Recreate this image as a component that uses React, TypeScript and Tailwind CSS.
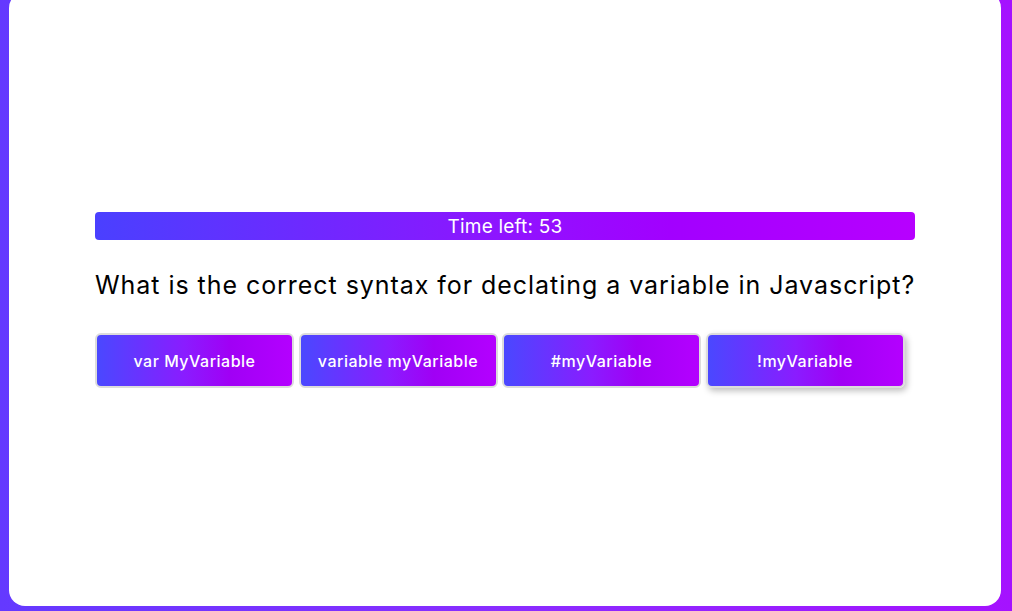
const answers = ["var MyVariable", "variable myVariable", "#myVariable", "!myVariable"];

export default function App() {
  return (
    <div className="h-[611px] w-full overflow-hidden bg-[linear-gradient(90deg,#6439ff_0%,#8a2cff_50%,#a512ff_100%)] pl-[9px] pr-[11px] font-['Inter',sans-serif]">
      <div className="mt-[-8px] flex h-[614px] items-center justify-center rounded-2xl bg-white">
        <div className="mt-[2px] flex w-[820px] flex-col">
          <div className="flex h-[28px] items-center justify-center rounded-[4px] bg-[linear-gradient(90deg,#4a40ff_0%,#8f14ff_50%,#a200ff_70%,#b700ff_100%)] pt-[2px] text-[19px] tracking-[0.2px] text-white">
            Time left: 53
          </div>
          <h1 className="mt-[28px] whitespace-nowrap text-[25px] leading-[34px] tracking-[0.95px] text-black">
            What is the correct syntax for declating a variable in Javascript?
          </h1>
          <div className="mt-[31px] flex gap-[4.5px]">
            {answers.map((a, i) => (
              <button
                key={a}
                className={`flex h-[55px] w-[199px] items-center justify-center rounded-[6px] border-2 border-[#dcdcdc] bg-[linear-gradient(90deg,#4a48ff_0%,#8a1cff_45%,#a000f5_68%,#b400ff_100%)] text-[16px] font-medium tracking-[0.5px] text-white ${i === 3 ? "shadow-[2px_3px_6px_rgba(0,0,0,0.25)]" : ""}`}
              >
                {a}
              </button>
            ))}
          </div>
        </div>
      </div>
    </div>
  );
}
